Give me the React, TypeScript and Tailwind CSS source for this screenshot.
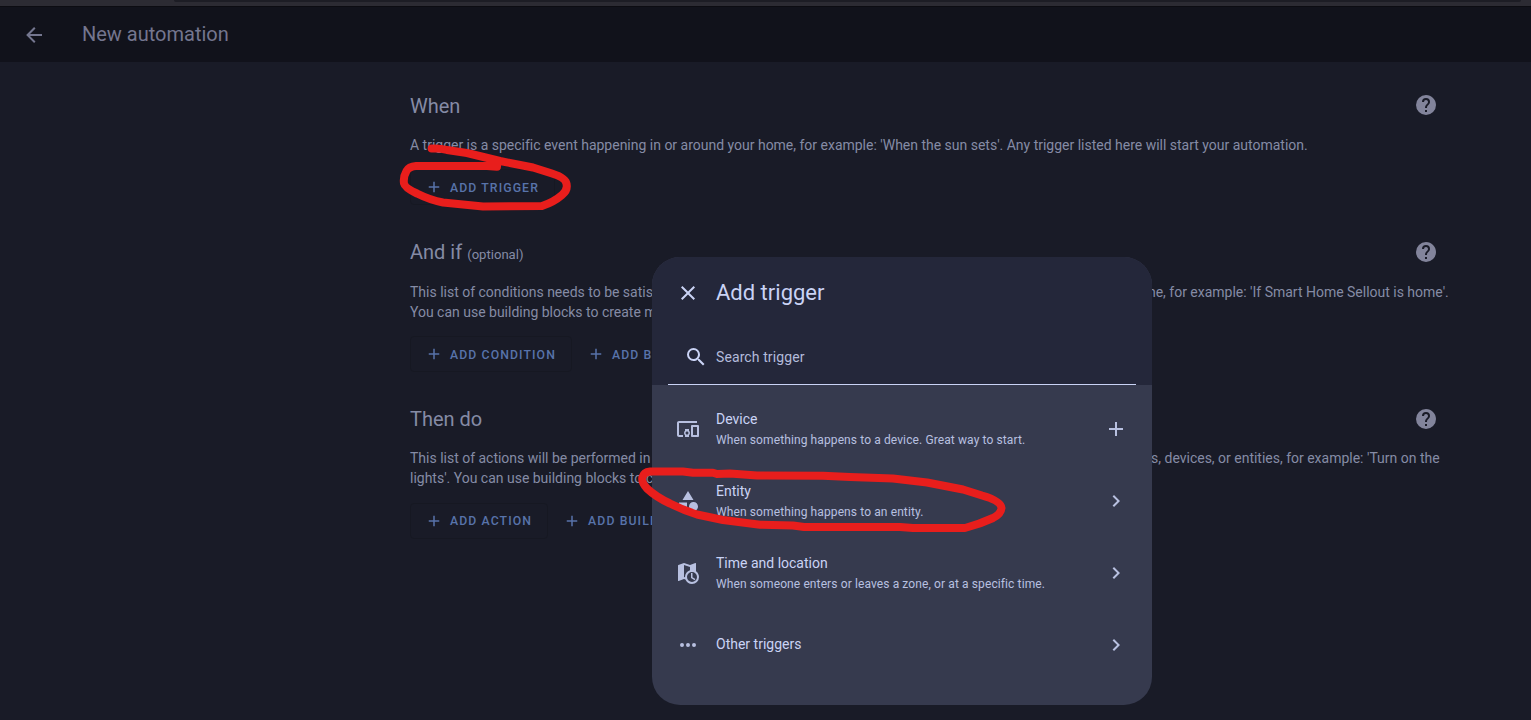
import type { ReactNode } from "react";

const icons = {
  arrowLeft: "M20,11V13H8L13.5,18.5L12.08,19.92L4.16,12L12.08,4.08L13.5,5.5L8,11H20Z",
  help: "M15.07,11.25L14.17,12.17C13.45,12.89 13,13.5 13,15H11V14.5C11,13.39 11.45,12.39 12.17,11.67L13.41,10.41C13.78,10.05 14,9.55 14,9C14,7.89 13.1,7 12,7A2,2 0 0,0 10,9H8A4,4 0 0,1 12,5A4,4 0 0,1 16,9C16,9.88 15.64,10.67 15.07,11.25M13,19H11V17H13M12,2A10,10 0 0,0 2,12A10,10 0 0,0 12,22A10,10 0 0,0 22,12C22,6.47 17.5,2 12,2Z",
  plus: "M19,13H13V19H11V13H5V11H11V5H13V11H19V13Z",
  close: "M19,6.41L17.59,5L12,10.59L6.41,5L5,6.41L10.59,12L5,17.59L6.41,19L12,13.41L17.59,19L19,17.59L13.41,12L19,6.41Z",
  chevron: "M8.59,16.58L13.17,12L8.59,7.41L10,6L16,12L10,18L8.59,16.58Z",
  magnify: "M9.5,3A6.5,6.5 0 0,1 16,9.5C16,11.11 15.41,12.59 14.44,13.73L14.71,14H15.5L20.5,19L19,20.5L14,15.5V14.71L13.73,14.44C12.59,15.41 11.11,16 9.5,16A6.5,6.5 0 0,1 3,9.5A6.5,6.5 0 0,1 9.5,3M9.5,5C7,5 5,7 5,9.5C5,12 7,14 9.5,14C12,14 14,12 14,9.5C14,7 12,5 9.5,5Z",
  devices: "M3 6H21V4H3C1.9 4 1 4.9 1 6V18C1 19.1 1.9 20 3 20H7V18H3V6M13 12H9V13.78C8.39 14.33 8 15.11 8 16C8 16.89 8.39 17.67 9 18.22V20H13V18.22C13.61 17.67 14 16.88 14 16S13.61 14.33 13 13.78V12M11 17.5C10.17 17.5 9.5 16.83 9.5 16S10.17 14.5 11 14.5 12.5 15.17 12.5 16 11.83 17.5 11 17.5M22 8H16C15.5 8 15 8.5 15 9V19C15 19.5 15.5 20 16 20H22C22.5 20 23 19.5 23 19V9C23 8.5 22.5 8 22 8M21 18H17V10H21V18Z",
  shape: "M11,13.5V21.5H3V13.5H11M12,2L17.5,11H6.5L12,2M17.5,13C20,13 22,15 22,17.5C22,20 20,22 17.5,22C15,22 13,20 13,17.5C13,15 15,13 17.5,13Z",
  mapClock: "M15,12H16.5V16.25L19.36,17.94L18.61,19.16L15,17V12M23,16A7,7 0 0,1 16,23C13,23 10.4,21.08 9.42,18.4L8,17.9L2.66,19.97L2.5,20A0.5,0.5 0 0,1 2,19.5V4.38C2,4.15 2.15,3.97 2.36,3.9L8,2L14,4.1L19.34,2H19.5A0.5,0.5 0 0,1 20,2.5V10.25C21.81,11.5 23,13.62 23,16M9,16C9,12.83 11.11,10.15 14,9.29V6.11L8,4V15.89L9,16.24C9,16.16 9,16.08 9,16M16,11A5,5 0 0,0 11,16A5,5 0 0,0 16,21A5,5 0 0,0 21,16A5,5 0 0,0 16,11Z",
  dots: "M16,12A2,2 0 0,1 18,10A2,2 0 0,1 20,12A2,2 0 0,1 18,14A2,2 0 0,1 16,12M10,12A2,2 0 0,1 12,10A2,2 0 0,1 14,12A2,2 0 0,1 12,14A2,2 0 0,1 10,12M4,12A2,2 0 0,1 6,10A2,2 0 0,1 8,12A2,2 0 0,1 6,14A2,2 0 0,1 4,12Z",
};

type IconName = keyof typeof icons;

function Icon({ name, className = "size-6" }: { name: IconName; className?: string }) {
  return (
    <svg viewBox="0 0 24 24" fill="currentColor" className={`shrink-0 ${className}`}>
      <path d={icons[name]} />
    </svg>
  );
}

function AddButton({
  label,
  outlined = false,
  labelClass = "pt-0.5",
}: {
  label: string;
  outlined?: boolean;
  labelClass?: string;
}) {
  return (
    <button
      className={`flex h-9 items-center whitespace-nowrap rounded border pl-3.5 text-[12.25px] font-medium uppercase tracking-[1.1px] text-[#5873aa] ${
        outlined ? "border-[#161822] pr-[15px]" : "border-transparent pr-4"
      }`}
    >
      <Icon name="plus" className="mr-[7px] size-[18px]" />
      <span className={labelClass}>{label}</span>
    </button>
  );
}

function Section({
  title,
  optional = false,
  text,
  titleClass = "",
  bodyClass = "mt-1.5 gap-3.5",
  children,
}: {
  title: string;
  optional?: boolean;
  text: string;
  titleClass?: string;
  bodyClass?: string;
  children: ReactNode;
}) {
  return (
    <section>
      <div className="flex h-12 items-center justify-between pr-3">
        <h2 className={`text-xl text-[#858ba5] ${titleClass}`}>
          {title}
          {optional && <small className="ml-[5px] text-[13.1px]">(optional)</small>}
        </h2>
        <Icon name="help" className="size-6 text-[#82849b]" />
      </div>
      <div className={`flex flex-col ${bodyClass}`}>
        <p className="text-sm leading-5 tracking-[-0.008px] text-[#858ba5]">{text}</p>
        <div className="flex">{children}</div>
      </div>
    </section>
  );
}

const triggers: { icon: IconName; title: string; detail?: string; end: IconName }[] = [
  { icon: "devices", title: "Device", detail: "When something happens to a device. Great way to start.", end: "plus" },
  { icon: "shape", title: "Entity", detail: "When something happens to an entity.", end: "chevron" },
  { icon: "mapClock", title: "Time and location", detail: "When someone enters or leaves a zone, or at a specific time.", end: "chevron" },
  { icon: "dots", title: "Other triggers", end: "chevron" },
];

function TriggerDialog() {
  return (
    <div className="absolute left-[652px] top-[257px] flex h-[448px] w-[500px] flex-col overflow-hidden rounded-[28px] bg-[#363a4e] text-[#cad3f5]">
      <div className="h-32 bg-[#24273a]">
        <div className="flex h-[72px] items-center gap-4 pl-6">
          <Icon name="close" />
          <h1 className="text-[22px] leading-7">Add trigger</h1>
        </div>
        <div className="mx-4 flex h-14 items-center gap-2 border-b border-[#cad3f5] pl-4">
          <Icon name="magnify" />
          <span className="text-sm tracking-[0.1px] text-[#b3bbda]">Search trigger</span>
        </div>
      </div>
      <ul className="pt-2">
        {triggers.map((t) => (
          <li key={t.title} className="flex h-[72px] items-center gap-4 px-6 text-[#b8c0e0]">
            <Icon name={t.icon} />
            <div className={t.detail ? "flex-1" : "flex-1 pb-0.5"}>
              <div className="text-sm leading-5 text-[#cad3f5]">{t.title}</div>
              {t.detail && <div className="-mb-px pt-px text-xs leading-5 tracking-[0.11px]">{t.detail}</div>}
            </div>
            <Icon name={t.end} />
          </li>
        ))}
      </ul>
    </div>
  );
}

function Markings() {
  return (
    <svg
      viewBox="0 0 1531 720"
      className="pointer-events-none absolute left-0 top-0 h-[720px] w-[1531px]"
      fill="none"
      stroke="#e81e1c"
      strokeWidth="8"
      strokeLinecap="round"
      strokeLinejoin="round"
    >
      <path d="M431.7 148.5Q440 148 447 150L467 153L500 161L533 167.5L552 173.5Q566 178 566.5 184Q568 190 562 195Q554 202 542 206L483 206.5L443 202.5Q430 200 417 193.5Q405 188 404 183.5Q403 177 406.5 171Q409 166.500 416 166H497L497 166.700L487 166" />
      <path d="M658 471.500H683L693 472.700H713L717 474L730 473.500L757 475.500L823 475.700L850 477L893 478.500L927 482.500L963 489.500L982 495.500Q1001 501 1001.500 508Q1001 514 993 518Q980 524 965 528H913L900 527H804L793 525.500L760 524.700L723 520L697 514.500Q683 510 670 503.500Q656 497 647 488.500Q641 482 642.500 477Q644 472 650 471.500Z" />
    </svg>
  );
}

export default function App() {
  return (
    <div className="relative h-[720px] w-[1531px] overflow-hidden bg-[#191b27] font-['Roboto',sans-serif]">
      <div className="h-1.5 bg-[#2c2b33] pl-[174px] pr-[10px]">
        <div className="h-0.5 rounded-b bg-[#1d1d25]" />
      </div>
      <header className="flex h-14 items-center border-t border-[#0c0c12] bg-[#11121b] pl-[22px] text-[#74768f]">
        <Icon name="arrowLeft" />
        <h1 className="ml-9 pb-0.5 text-xl">New automation</h1>
      </header>
      <main className="ml-[410px] mt-[19px] flex w-[1040px] flex-col gap-[23px]">
        <Section
          title="When"
          titleClass="pt-0.5"
          text="A trigger is a specific event happening in or around your home, for example: 'When the sun sets'. Any trigger listed here will start your automation."
        >
          <AddButton label="Add trigger" outlined />
        </Section>
        <Section
          title="And if"
          optional
          text="This list of conditions needs to be satisfied for the automation to run. A condition can be satisfied or not at any given time, for example: 'If Smart Home Sellout is home'. You can use building blocks to create more complex conditions."
        >
          <AddButton label="Add condition" outlined />
          <AddButton label="Add building block" />
        </Section>
        <Section
          title="Then do"
          bodyClass="mt-[5px] gap-[15px]"
          text="This list of actions will be performed in sequence when the automation runs. An action usually controls one of your areas, devices, or entities, for example: 'Turn on the lights'. You can use building blocks to create more complex sequences of actions."
        >
          <AddButton label="Add action" outlined labelClass="" />
          <AddButton label="Add building block" labelClass="" />
        </Section>
      </main>
      <TriggerDialog />
      <Markings />
    </div>
  );
}
